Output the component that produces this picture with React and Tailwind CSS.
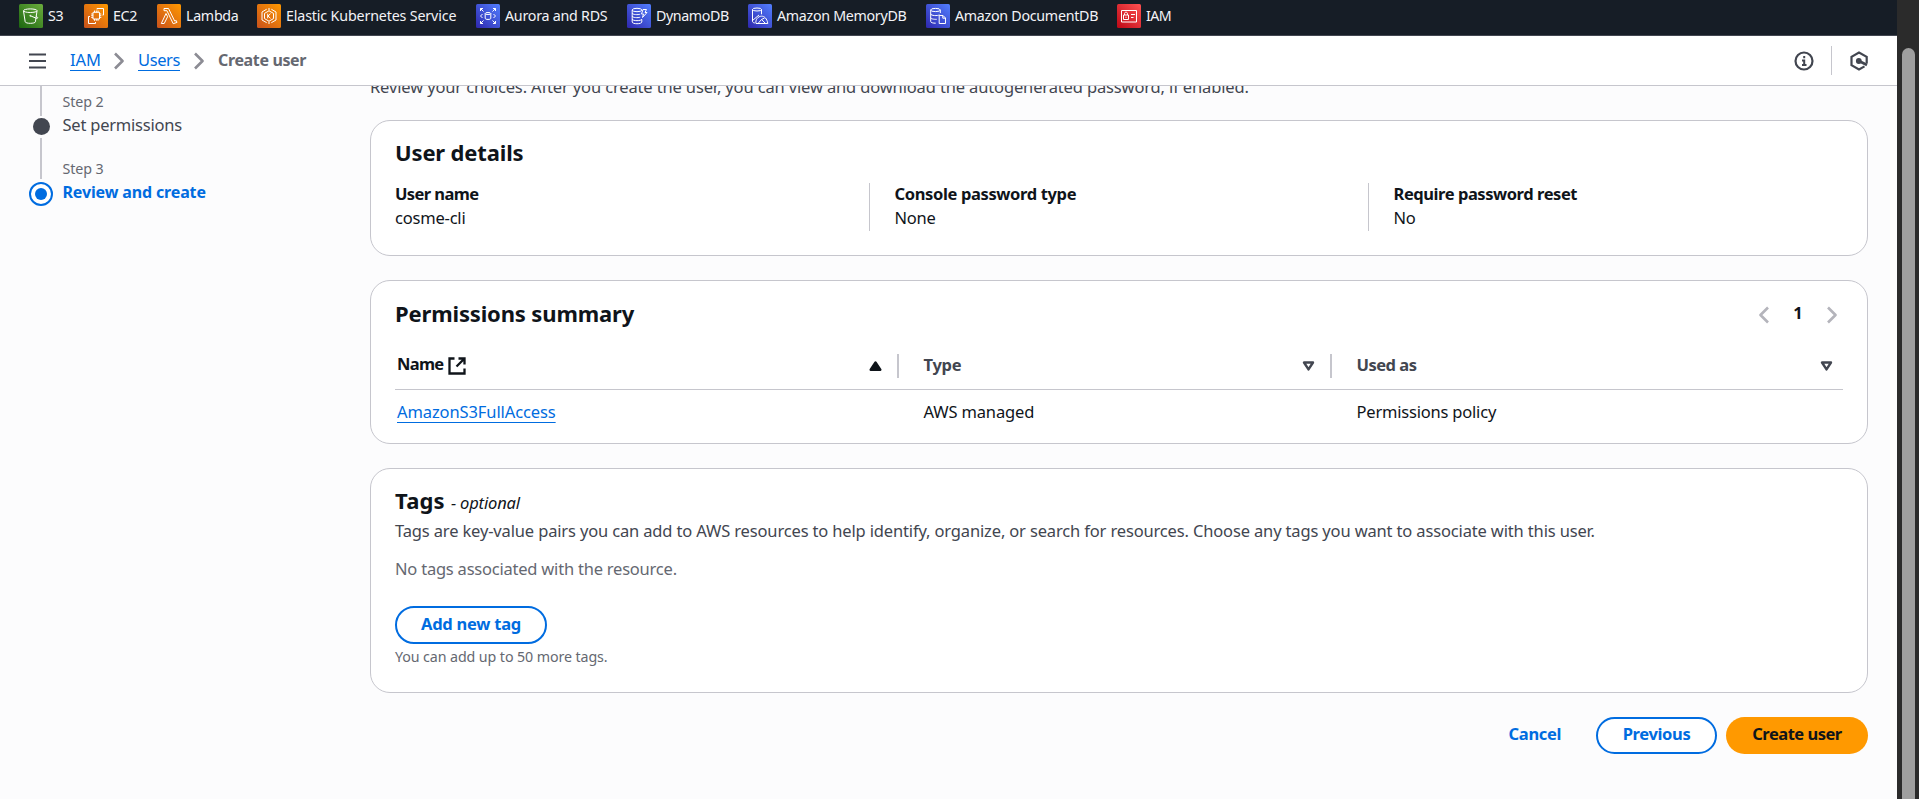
const SERVICES = [
  { id: "s3", label: "S3", from: "#1b660f", to: "#6cae3e", box: "w-[65px]", text: "tracking-[-0.2px]" },
  { id: "ec2", label: "EC2", from: "#c8511b", to: "#ff9900", box: "w-[73px]", text: "tracking-[-0.3px]" },
  { id: "lambda", label: "Lambda", from: "#c8511b", to: "#ff9900", box: "w-[100px]", text: "tracking-[-0.3px]" },
  { id: "eks", label: "Elastic Kubernetes Service", from: "#c8511b", to: "#ff9900", box: "w-[219px]", text: "tracking-[-0.15px]" },
  { id: "rds", label: "Aurora and RDS", from: "#2e27ad", to: "#527fff", box: "w-[151px]", text: "tracking-[-0.24px]" },
  { id: "dynamo", label: "DynamoDB", from: "#2e27ad", to: "#527fff", box: "w-[121px]", text: "tracking-[-0.4px]" },
  { id: "memory", label: "Amazon MemoryDB", from: "#2e27ad", to: "#527fff", box: "w-[178px]", text: "tracking-[-0.3px]" },
  { id: "document", label: "Amazon DocumentDB", from: "#2e27ad", to: "#527fff", box: "w-[191px]", text: "tracking-[-0.28px]" },
  { id: "iam", label: "IAM", from: "#bd0816", to: "#ff5252", box: "w-[60px]", text: "tracking-[-0.6px]" },
];

const GLYPHS = {
  s3: (
    <>
      <ellipse cx="11.3" cy="6.7" rx="6.8" ry="1.8" />
      <path d="M4.5 7l1.700 10.800c.2 2 10 2 10.200 0L18 7M11.500 11.800l5.400 2.300c2 .8 2.800-.5 0-2.100" />
      <circle cx="11.3" cy="11.8" r=".5" />
    </>
  ),
  ec2: (
    <>
      <path d="M9 8.300h6.500V15H9zM10.500 8.300V6.500M12.300 8.300V6.500M14 8.300V6.500M10.500 16.800V15M12.300 16.800V15M14 16.800V15M9 10H7.200M9 11.700H7.200M9 13.400H7.200M17.300 10h-1.800M17.300 11.700h-1.800M17.300 13.400h-1.800" />
      <path d="M13 5.500v-1h6.500V11h-1M6 12.500H4.500v7H11.500V18" />
    </>
  ),
  lambda: <path d="M7 4.500h4.500l6.200 12.600 1.500-.6.800 1.900-3.800 1.300-6.300-13H7zM9 9.500l1.600 3.200-3.400 6.800H4.300z" />,
  eks: (
    <>
      <path d="M9.700 5.200L5 8v8l4.700 2.700M14.300 5.200L19 8v8l-4.700 2.700M12 4v2.500M12 17.500V20" />
      <path d="M12 6.800l4.500 2.600v5.200L12 17.200l-4.500-2.600V9.400z" />
      <path d="M10.700 9.700v4.600M13.500 9.700L11 12l2.500 2.300" />
    </>
  ),
  rds: (
    <>
      <ellipse cx="12" cy="9.500" rx="2.800" ry="1" />
      <path d="M9.200 9.500v5c0 1.300 5.600 1.300 5.600 0v-5M4.500 7V4.500H7M4.500 4.500l3 3M17 4.500h2.500V7M19.500 4.500l-3 3M4.500 17v2.500H7M4.500 19.500l3-3M17 19.500h2.500V17M19.500 19.500l-3-3M6.500 10L4.500 12l2 2M17.500 10l2 2-2 2" />
    </>
  ),
  dynamo: (
    <>
      <ellipse cx="10" cy="6" rx="4.800" ry="1.700" />
      <path d="M5.200 6v12c0 2.300 9.600 2.300 9.600 0v-2.500M5.200 9c0 1.800 6 2 8 1.200M5.200 12c0 1.800 6 2 8 1.200M5.200 15c0 2.200 9.600 2.200 9.600 0M16 5.500h3.500l-1.500 3h2l-4.500 5 1-3.500h-2z" />
    </>
  ),
  memory: (
    <>
      <ellipse cx="9" cy="5.500" rx="4.500" ry="1.500" />
      <path d="M4.500 5.500v12c0 .8 1 1.200 2.300 1.500M13.500 5.500v4.800M4.500 16.500L11 11M8 19.500c-.8-4 2.200-7.300 5.500-7.300 3 0 5.500 2.300 6.300 7.300zM10 19.500l3.500-4 4 4M13.500 15.500l3-1.500" />
    </>
  ),
  document: (
    <>
      <ellipse cx="9.500" cy="6" rx="4.800" ry="1.600" />
      <path d="M4.700 6v11.500c0 1.200 2.500 1.700 5 1.700M14.300 6v3M4.700 9.800c0 2 7 2.300 8.800 1M4.700 13.600c0 1.400 3.300 1.800 6 1.700M13.200 11.500h3.800l2.500 2.500v5.500h-6.300zM16.800 11.500v2.700h2.700" />
    </>
  ),
  iam: <path d="M4.500 6.500h15v11.500h-15zM6.500 11h5v4.500h-5zM7.500 11V9.700c0-2 3-2 3 0V11M14 10.500h4M14 13.500h2.500M9 12.700v1.200" />,
};

function ServiceIcon({ id, from, to }) {
  return (
    <svg viewBox="0 0 24 24" className="size-6 shrink-0">
      <defs>
        <linearGradient id={`g-${id}`} x1="0" y1="1" x2="1" y2="0">
          <stop offset="0" stopColor={from} />
          <stop offset="1" stopColor={to} />
        </linearGradient>
      </defs>
      <rect width="24" height="24" rx="1.5" fill={`url(#g-${id})`} />
      <g fill="none" stroke="#fff" strokeWidth="1">{GLYPHS[id]}</g>
    </svg>
  );
}

function Chevron({ left, className }) {
  return (
    <svg viewBox="0 0 10 18" className={`h-[18px] w-2.5 shrink-0 ${className}`} fill="none" stroke="currentColor" strokeWidth="2.6" strokeLinejoin="round">
      <path d={left ? "M9 1.500L1.500 9 9 16.500" : "M1 1.500L8.500 9 1 16.500"} />
    </svg>
  );
}

function SortIcon({ active }) {
  return (
    <svg viewBox="0 0 13 11" className="h-[11px] w-[13px] shrink-0" strokeWidth="2.4" strokeLinejoin="round">
      {active ? (
        <path d="M6.500 1.500L11.300 8.700H1.700z" fill="#0f141a" stroke="#0f141a" />
      ) : (
        <path d="M2 1.500h9L6.500 8.400z" fill="none" stroke="#424650" />
      )}
    </svg>
  );
}

function Card({ className, children }) {
  return <section className={`rounded-[20px] border border-[#c6c6cd] bg-white px-6 pt-[18px] ${className}`}>{children}</section>;
}

function Heading({ className, children }) {
  return <h2 className={`whitespace-nowrap text-[22px] font-bold leading-7 ${className}`}>{children}</h2>;
}

function Field({ label, value, labelClass, className }) {
  return (
    <div className={`h-12 ${className}`}>
      <div className="-mt-px flex flex-col leading-6">
        <span className={`font-bold ${labelClass}`}>{label}</span>
        <span className="tracking-[-0.2px]">{value}</span>
      </div>
    </div>
  );
}

function TopBar() {
  return (
    <nav className="flex h-9 shrink-0 border-b border-[#424650] bg-[#161d26] pl-[19px] pt-1">
      {SERVICES.map((s) => (
        <div key={s.id} className={`flex h-6 shrink-0 items-center gap-[5px] whitespace-nowrap ${s.box}`}>
          <ServiceIcon id={s.id} from={s.from} to={s.to} />
          <span className={`text-[14.25px] leading-6 text-[#f3f3f7] ${s.text}`}>{s.label}</span>
        </div>
      ))}
    </nav>
  );
}

function BreadcrumbBar() {
  return (
    <header className="flex h-[50px] shrink-0 items-center border-b border-[#c6c6cd] bg-white pl-[29px] pr-7">
      <svg viewBox="0 0 17 16" className="h-4 w-[17px]" stroke="#424650" strokeWidth="2.2">
        <path d="M0 1.500h17M0 8h17M0 14.500h17" />
      </svg>
      <div className="ml-6 flex items-center leading-6">
        <a className="w-[29px] pb-0.5 tracking-[-0.1px] text-[#006ce0] underline decoration-1 underline-offset-4">IAM</a>
        <Chevron className="ml-[15px] text-[#8c8c94]" />
        <a className="ml-3.5 w-[42px] pb-0.5 tracking-[-0.4px] text-[#006ce0] underline decoration-1 underline-offset-4">Users</a>
        <Chevron className="ml-3.5 text-[#8c8c94]" />
        <span className="ml-3.5 pb-0.5 text-[16px] font-bold tracking-[-0.36px] text-[#656871]">Create user</span>
      </div>
      <div className="ml-auto flex items-center">
        <svg viewBox="0 0 20 20" className="size-5" fill="none" stroke="#424650" strokeWidth="2.2">
          <circle cx="10" cy="10" r="8.500" />
          <path d="M10.200 5v2.200M8 9.500h2.200V14.300M8 14h4.500" strokeWidth="2" />
        </svg>
        <div className="ml-[17px] h-[29px] w-px bg-[#c6c6cd]" />
        <svg viewBox="0 0 20 20" className="ml-[17px] size-5" fill="none" stroke="#424650" strokeWidth="2.200">
          <path d="M17.700 12.500V5.800L10 1.600 2.500 5.800v8.400L10 18.400l5.500-3" />
          <path d="M10 10l8 4" strokeWidth="2.600" />
          <circle cx="9.800" cy="10" r="1.800" fill="#424650" />
        </svg>
      </div>
    </header>
  );
}

function Steps() {
  return (
    <aside className="flex w-[370px] shrink-0 pl-[29px]">
      <div className="flex w-6 flex-col items-center">
        <div className="h-[30px] w-0.5 bg-[#c6c6cd]" />
        <div className="mt-[2px] size-[17px] rounded-full bg-[#424650]" />
        <div className="mt-[3px] h-[41px] w-0.5 bg-[#c6c6cd]" />
        <div className="mt-[3px] flex size-6 items-center justify-center rounded-full border-2 border-[#006ce0] bg-white">
          <div className="size-3 rounded-full bg-[#006ce0]" />
        </div>
      </div>
      <div className="ml-[9.5px] flex flex-col whitespace-nowrap pt-1.5">
        <span className="text-[14.250px] leading-5 tracking-[-0.1px] text-[#656871]">Step 2</span>
        <span className="mt-px leading-6 tracking-[-0.22px] text-[#424650]">Set permissions</span>
        <span className="mt-[22px] text-[14.250px] leading-5 tracking-[-0.1px] text-[#656871]">Step 3</span>
        <span className="mt-px text-[16px] font-bold leading-6 tracking-[-0.14px] text-[#006ce0]">Review and create</span>
      </div>
    </aside>
  );
}

function UserDetails() {
  return (
    <Card className="h-[136px]">
      <Heading className="-mt-px tracking-[-0.15px]">User details</Heading>
      <div className="mt-[17px] grid grid-cols-[474px_499px_1fr]">
        <Field label="User name" value="cosme-cli" labelClass="tracking-[-0.6px]" className="" />
        <Field label="Console password type" value="None" labelClass="tracking-[-0.36px]" className="border-l border-[#c6c6cd] pl-[24.5px]" />
        <Field label="Require password reset" value="No" labelClass="tracking-[-0.44px]" className="border-l border-[#c6c6cd] pl-[24.5px]" />
      </div>
    </Card>
  );
}

function Permissions() {
  return (
    <Card className="h-[164px]">
      <div className="flex items-center justify-between">
        <Heading className="tracking-[-0.15px]">Permissions summary</Heading>
        <div className="flex items-center pr-1.5 pt-1">
          <Chevron left className="text-[#b4b4bb]" />
          <span className="w-[58px] pb-1 text-center font-bold leading-5">1</span>
          <Chevron className="text-[#b4b4bb]" />
        </div>
      </div>
      <div className="grid h-[63px] grid-cols-[504px_433px_1fr] border-b border-[#c6c6cd] pt-4 font-bold">
        <div className="flex items-center">
          <div className="flex h-6 flex-1 items-center justify-between border-r-2 border-[#c6c6cd] pl-0.5 pr-[15px]">
            <div className="flex items-center gap-[5px]">
              <span className="pb-1 leading-6 tracking-[-0.7px]">Name</span>
              <svg viewBox="0 0 18 18" className="size-[18px]" fill="none" stroke="#0f141a" strokeWidth="2.3">
                <path d="M6.500 1.500H1.500v15h15v-5M10.500 1.500h6V7.500M16.500 1.500L8.500 9.500" />
              </svg>
            </div>
            <SortIcon active />
          </div>
        </div>
        <div className="flex items-center text-[#424650]">
          <div className="flex h-6 flex-1 items-center justify-between border-r-2 border-[#c6c6cd] pl-[24.5px] pr-[15px]">
            <span className="pb-0.5 leading-6 tracking-[-0.3px]">Type</span>
            <SortIcon />
          </div>
        </div>
        <div className="flex items-center justify-between pl-[24.5px] pr-2.5 text-[#424650]">
          <span className="pb-0.5 leading-6 tracking-[-0.5px]">Used as</span>
          <SortIcon />
        </div>
      </div>
      <div className="grid grid-cols-[504px_433px_1fr] pt-2.5 leading-6">
        <a className="pl-0.5 tracking-[-0.1px] text-[#006ce0] underline decoration-1 underline-offset-4">AmazonS3FullAccess</a>
        <span className="pl-[24.5px] tracking-[-0.15px]">AWS managed</span>
        <span className="pl-[24.5px] tracking-[-0.2px]">Permissions policy</span>
      </div>
    </Card>
  );
}

function Tags() {
  return (
    <Card className="h-[225px]">
      <div className="-mt-px flex h-7 items-baseline gap-1.5">
        <Heading className="tracking-[0.2px]">Tags</Heading>
        <span className="text-[16.5px] italic leading-6 tracking-[-0.15px]">- optional</span>
      </div>
      <p className="mt-[5px] whitespace-nowrap leading-6 tracking-[-0.15px] text-[#424650]">
        Tags are key-value pairs you can add to AWS resources to help identify, organize, or search for resources. Choose any tags you want to associate with this user.
      </p>
      <p className="mt-3.5 leading-6 tracking-[-0.22px] text-[#656871]">No tags associated with the resource.</p>
      <button className="mt-[25px] flex h-[38px] w-[152px] items-center justify-center rounded-full border-2 border-[#006ce0] pb-0.5 font-bold tracking-[-0.25px] text-[#006ce0]">
        Add new tag
      </button>
      <p className="mt-[3px] text-[14.25px] leading-5 tracking-[-0.1px] text-[#656871]">You can add up to 50 more tags.</p>
    </Card>
  );
}

function Actions() {
  return (
    <div className="flex justify-end gap-[9px] font-bold">
      <button className="mr-[26px] flex h-[37px] items-center pb-0.5 tracking-[-0.35px] text-[#006ce0]">Cancel</button>
      <button className="flex h-[37px] w-[121px] items-center justify-center rounded-full border-2 border-[#006ce0] bg-white pb-0.5 tracking-[-0.35px] text-[#006ce0]">
        Previous
      </button>
      <button className="flex h-[37px] w-[142px] items-center justify-center rounded-full bg-[#ff9900] pb-0.5 tracking-[-0.5px]">Create user</button>
    </div>
  );
}

export default function App() {
  return (
    <div className="flex h-[799px] w-[1919px] overflow-hidden bg-[#2b2b2b] font-['Noto_Sans','Open_Sans',sans-serif] text-[16.5px] text-[#0f141a]">
      <div className="flex w-[1897px] flex-col bg-[#fcfcfd]">
        <TopBar />
        <BreadcrumbBar />
        <div className="flex min-h-0 flex-1 overflow-hidden">
          <Steps />
          <main className="flex w-[1498px] flex-col gap-6">
            <p className="-mb-[14px] -mt-[11px] h-[35px] whitespace-nowrap leading-6 tracking-[-0.14px] text-[#424650]">
              Review your choices. After you create the user, you can view and download the autogenerated password, if enabled.
            </p>
            <UserDetails />
            <Permissions />
            <Tags />
            <Actions />
          </main>
        </div>
      </div>
      <div className="flex flex-1 justify-start pl-[5px] pt-12">
        <div className="w-[13px] rounded-t-full bg-[#9f9f9f]" />
      </div>
    </div>
  );
}
